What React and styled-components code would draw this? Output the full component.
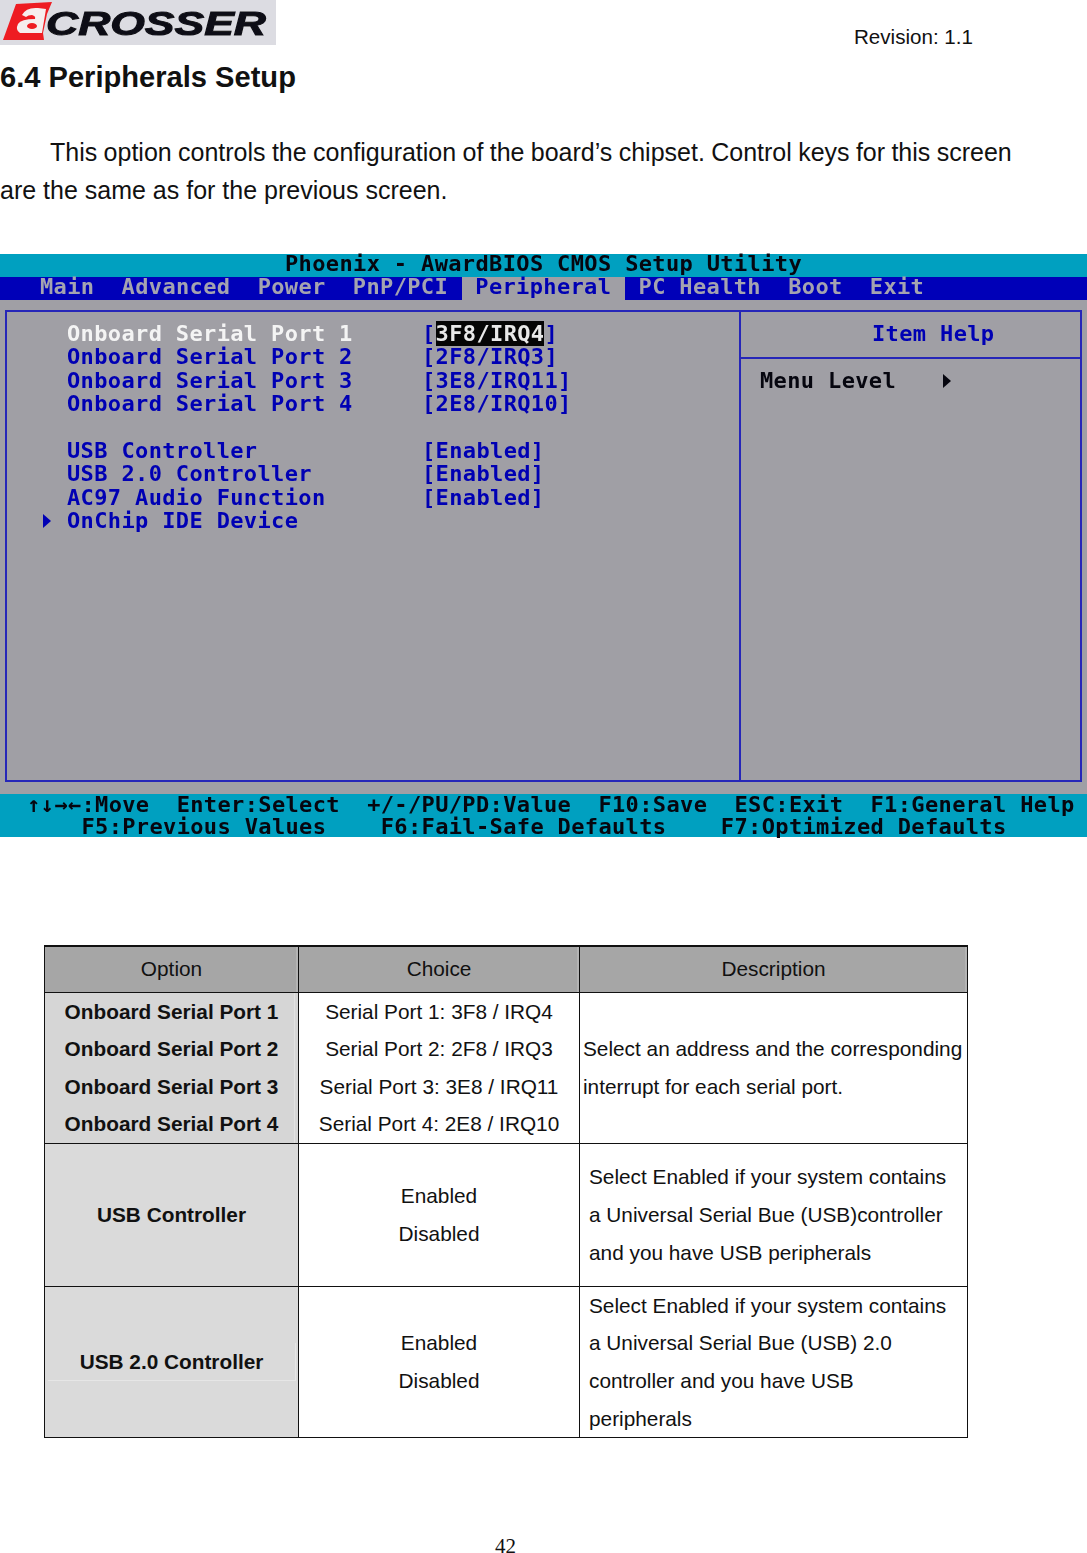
import React from 'react';
import styled, { createGlobalStyle } from 'styled-components';

const Global = createGlobalStyle`
  html, body { margin: 0; padding: 0; background: #fff; }
  body { font-family: "Liberation Sans", Arial, sans-serif; color: #111; }
`;

const Page = styled.div`
  width: 1087px;
  display: flex;
  flex-direction: column;
  & > * { flex-shrink: 0; }
`;
const TopBar = styled.header`
  display: flex;
  justify-content: space-between;
  height: 45px;
`;
const Revision = styled.div`
  font-size: 20.6px;
  line-height: 24px;
  padding: 25px 114px 0 0;
`;
const Heading = styled.h1`
  margin: 14px 0 0;
  font-size: 29.1px;
  line-height: 36px;
  font-weight: 700;
`;
const Intro = styled.div`
  margin-top: 38px;
  font-size: 25px;
  line-height: 38px;
`;
const IntroLine = styled.p`
  margin: 0;
  padding-left: ${p => (p.$first ? '50px' : '0')};
  word-spacing: ${p => (p.$first ? '-0.6px' : '0')};
  white-space: nowrap;
`;

const Bios = styled.section`
  margin-top: 45px;
  height: 583px;
  display: flex;
  flex-direction: column;
  font-family: "DejaVu Sans Mono", "Liberation Mono", monospace;
  font-weight: 700;
  font-size: 22px;
  letter-spacing: 0.36px;
  line-height: 23.4px;
  white-space: pre;
  background: #a09fa5;
  color: #0000b4;
  filter: blur(0.35px);
`;
const TitleBar = styled.div`
  height: 23px;
  line-height: 20px;
  background: #00a0c0;
  color: #06060f;
  text-align: center;
`;
const MenuBar = styled.nav`
  height: 23px;
  line-height: 20px;
  display: flex;
  padding-left: 26.4px;
  background: #0000b8;
`;
const MenuItem = styled.span`
  padding: 0 13.6px;
  background: ${p => (p.$active ? '#a09fa5' : 'transparent')};
  color: ${p => (p.$active ? '#0000b4' : '#a4a3b0')};
`;
const MainArea = styled.div`
  flex: 1;
  min-height: 0;
  padding: 10px 5px 12px;
  display: flex;
`;
const Frame = styled.div`
  flex: 1;
  display: grid;
  grid-template-columns: 734px 1fr;
  border: 2px solid #2626b8;
`;
const ItemPanel = styled.div`
  padding-top: 10px;
  border-right: 2px solid #2626b8;
`;
const ItemRow = styled.div`
  height: 23.4px;
  display: grid;
  grid-template-columns: 36px 24px 355px 1fr;
`;
const Marker = styled.svg`
  align-self: center;
  width: 8px;
  height: 14px;
  fill: ${p => p.$color || '#0000b4'};
`;
const ItemLabel = styled.span`
  grid-column: 3;
  color: ${p => (p.$selected ? '#f4f4f4' : 'inherit')};
`;
const Selected = styled.span`
  background: #050505;
  color: #e8e8e8;
`;
const HelpPanel = styled.div`
  display: flex;
  flex-direction: column;
`;
const HelpTitle = styled.div`
  height: 47px;
  box-sizing: border-box;
  padding: 10px 0 0 131px;
  border-bottom: 2px solid #2626b8;
`;
const HelpLevel = styled.div`
  display: flex;
  align-items: center;
  padding: 10px 0 0 19px;
  color: #06060f;
`;
const HelpMarker = styled(Marker)`
  margin-left: 47px;
`;
const FooterBar = styled.div`
  flex: none;
  height: 43px;
  padding-left: 27px;
  background: #00a0c0;
  color: #06060f;
  line-height: 22px;
`;

const OptionTable = styled.table`
  margin: 108px 0 0 44px;
  width: 923px;
  table-layout: fixed;
  border-collapse: collapse;
  font-size: 20.8px;
  line-height: 37.6px;
  border-top: 2px solid #111;
`;
const TableRow = styled.tr`
  height: ${p => p.$h}px;
`;
const HeadCell = styled.th`
  padding: 0;
  font-weight: 400;
  background: #a6a6a6;
  border: 1px solid #111;
  box-shadow: inset -2px 0 0 #b4b4b4;
  text-align: center;
`;
const OptionCell = styled.td`
  padding: 0;
  background: ${p => (p.$banded ? '#d6d6d6' : '#dadada')};
  border: 1px solid #111;
  font-weight: 700;
  text-align: center;
  vertical-align: middle;
  box-shadow: ${p => (p.$banded ? 'inset -3px 0 0 #d6d6d6, inset -4px 0 0 #e2e2e2' : 'none')};
`;
const OptionText = styled.div`
  margin: 0 2px 0 3px;
  border-right: 1px solid #e6e6e6;
  border-bottom: 1px solid #e6e6e6;
`;
const ChoiceCell = styled.td`
  padding: 0;
  border: 1px solid #111;
  text-align: center;
  vertical-align: middle;
`;
const DescCell = styled.td`
  padding: 0 0 0 ${p => p.$pad}px;
  border: 1px solid #111;
  vertical-align: middle;
  white-space: nowrap;
`;
const PageNumber = styled.footer`
  margin-top: 101px;
  padding-right: 76px;
  text-align: center;
  font-family: "Liberation Serif", "Times New Roman", serif;
  font-size: 21px;
  line-height: 14px;
`;

const Logo = () => (
  <svg width="276" height="45" viewBox="0 0 276 45" role="img" aria-label="Acrosser">
    <defs>
      <filter id="soft"><feGaussianBlur stdDeviation="0.7" /></filter>
    </defs>
    <rect width="276" height="45" fill="#dcdce2" />
    <g filter="url(#soft)">
      <path d="M16 4 L52 2 L47 14 L43 33 L44 40 L3 40 Z" fill="#ee1c22" />
      <path d="M22 15 Q26 7 38 8 L46 9 L42 33 L20 33 Q15 30 18 24 Q21 19 35 19 Q36 16 32 15 Q28 15 26 17 Z" fill="#f6eeee" />
      <ellipse cx="32" cy="26" rx="5" ry="3" fill="#ee1c22" />
      <text
        x="46"
        y="35"
        textLength="220"
        lengthAdjust="spacingAndGlyphs"
        fontFamily="Liberation Sans, Arial, sans-serif"
        fontWeight="700"
        fontStyle="italic"
        fontSize="34"
        stroke="#101014"
        strokeWidth="1"
        fill="#101014"
      >
        CROSSER
      </text>
    </g>
  </svg>
);

const Arrow = ({ color, className }) => (
  <Marker viewBox="0 0 8 14" $color={color} className={className}>
    <path d="M0 0 L8 7 L0 14 Z" />
  </Marker>
);

const tabs = ['Main', 'Advanced', 'Power', 'PnP/PCI', 'Peripheral', 'PC Health', 'Boot', 'Exit'];
const bracket = (s) => `[${s}]`;

const Row = ({ label, value, selected, arrow }) => (
  <ItemRow>
    <span />
    {arrow ? <Arrow /> : <span />}
    <ItemLabel $selected={selected}>{label}</ItemLabel>
    <span>{selected ? <>[<Selected>{value}</Selected>]</> : value && bracket(value)}</span>
  </ItemRow>
);

const StackLines = ({ lines }) => lines.map((l) => <div key={l}>{l}</div>);

export default function App() {
  return (
    <Page>
      <Global />
      <TopBar>
        <Logo />
        <Revision>Revision: 1.1</Revision>
      </TopBar>
      <Heading>6.4 Peripherals Setup</Heading>
      <Intro>
        <IntroLine $first>This option controls the configuration of the board’s chipset. Control keys for this screen</IntroLine>
        <IntroLine>are the same as for the previous screen.</IntroLine>
      </Intro>

      <Bios>
        <TitleBar>Phoenix - AwardBIOS CMOS Setup Utility</TitleBar>
        <MenuBar>
          {tabs.map((t) => (
            <MenuItem key={t} $active={t === 'Peripheral'}>{t}</MenuItem>
          ))}
        </MenuBar>
        <MainArea>
          <Frame>
            <ItemPanel>
              <Row label="Onboard Serial Port 1" value="3F8/IRQ4" selected />
              <Row label="Onboard Serial Port 2" value="2F8/IRQ3" />
              <Row label="Onboard Serial Port 3" value="3E8/IRQ11" />
              <Row label="Onboard Serial Port 4" value="2E8/IRQ10" />
              <Row label="" />
              <Row label="USB Controller" value="Enabled" />
              <Row label="USB 2.0 Controller" value="Enabled" />
              <Row label="AC97 Audio Function" value="Enabled" />
              <Row label="OnChip IDE Device" arrow />
            </ItemPanel>
            <HelpPanel>
              <HelpTitle>Item Help</HelpTitle>
              <HelpLevel>
                Menu Level
                <HelpMarker viewBox="0 0 8 14" $color="#06060f">
                  <path d="M0 0 L8 7 L0 14 Z" />
                </HelpMarker>
              </HelpLevel>
            </HelpPanel>
          </Frame>
        </MainArea>
        <FooterBar>
          {'↑↓→←:Move  Enter:Select  +/-/PU/PD:Value  F10:Save  ESC:Exit  F1:General Help\n    F5:Previous Values    F6:Fail-Safe Defaults    F7:Optimized Defaults'}
        </FooterBar>
      </Bios>

      <OptionTable>
        <colgroup>
          <col style={{ width: 254 }} />
          <col style={{ width: 281 }} />
          <col style={{ width: 388 }} />
        </colgroup>
        <thead>
          <TableRow $h={46}>
            <HeadCell>Option</HeadCell>
            <HeadCell>Choice</HeadCell>
            <HeadCell>Description</HeadCell>
          </TableRow>
        </thead>
        <tbody>
          <TableRow $h={151}>
            <OptionCell $banded>
              <StackLines lines={['Onboard Serial Port 1', 'Onboard Serial Port 2', 'Onboard Serial Port 3', 'Onboard Serial Port 4']} />
            </OptionCell>
            <ChoiceCell>
              <StackLines lines={['Serial Port 1: 3F8 / IRQ4', 'Serial Port 2: 2F8 / IRQ3', 'Serial Port 3: 3E8 / IRQ11', 'Serial Port 4: 2E8 / IRQ10']} />
            </ChoiceCell>
            <DescCell $pad={3}>
              <StackLines lines={['Select an address and the corresponding', 'interrupt for each serial port.']} />
            </DescCell>
          </TableRow>
          <TableRow $h={143}>
            <OptionCell>USB Controller</OptionCell>
            <ChoiceCell><StackLines lines={['Enabled', 'Disabled']} /></ChoiceCell>
            <DescCell $pad={9}>
              <StackLines lines={['Select Enabled if your system contains', 'a Universal Serial Bue (USB)controller', 'and you have USB peripherals']} />
            </DescCell>
          </TableRow>
          <TableRow $h={151}>
            <OptionCell><OptionText>USB 2.0 Controller</OptionText></OptionCell>
            <ChoiceCell><StackLines lines={['Enabled', 'Disabled']} /></ChoiceCell>
            <DescCell $pad={9}>
              <StackLines lines={['Select Enabled if your system contains', 'a Universal Serial Bue (USB) 2.0', 'controller and you have USB', 'peripherals']} />
            </DescCell>
          </TableRow>
        </tbody>
      </OptionTable>
      <PageNumber>42</PageNumber>
    </Page>
  );
}
